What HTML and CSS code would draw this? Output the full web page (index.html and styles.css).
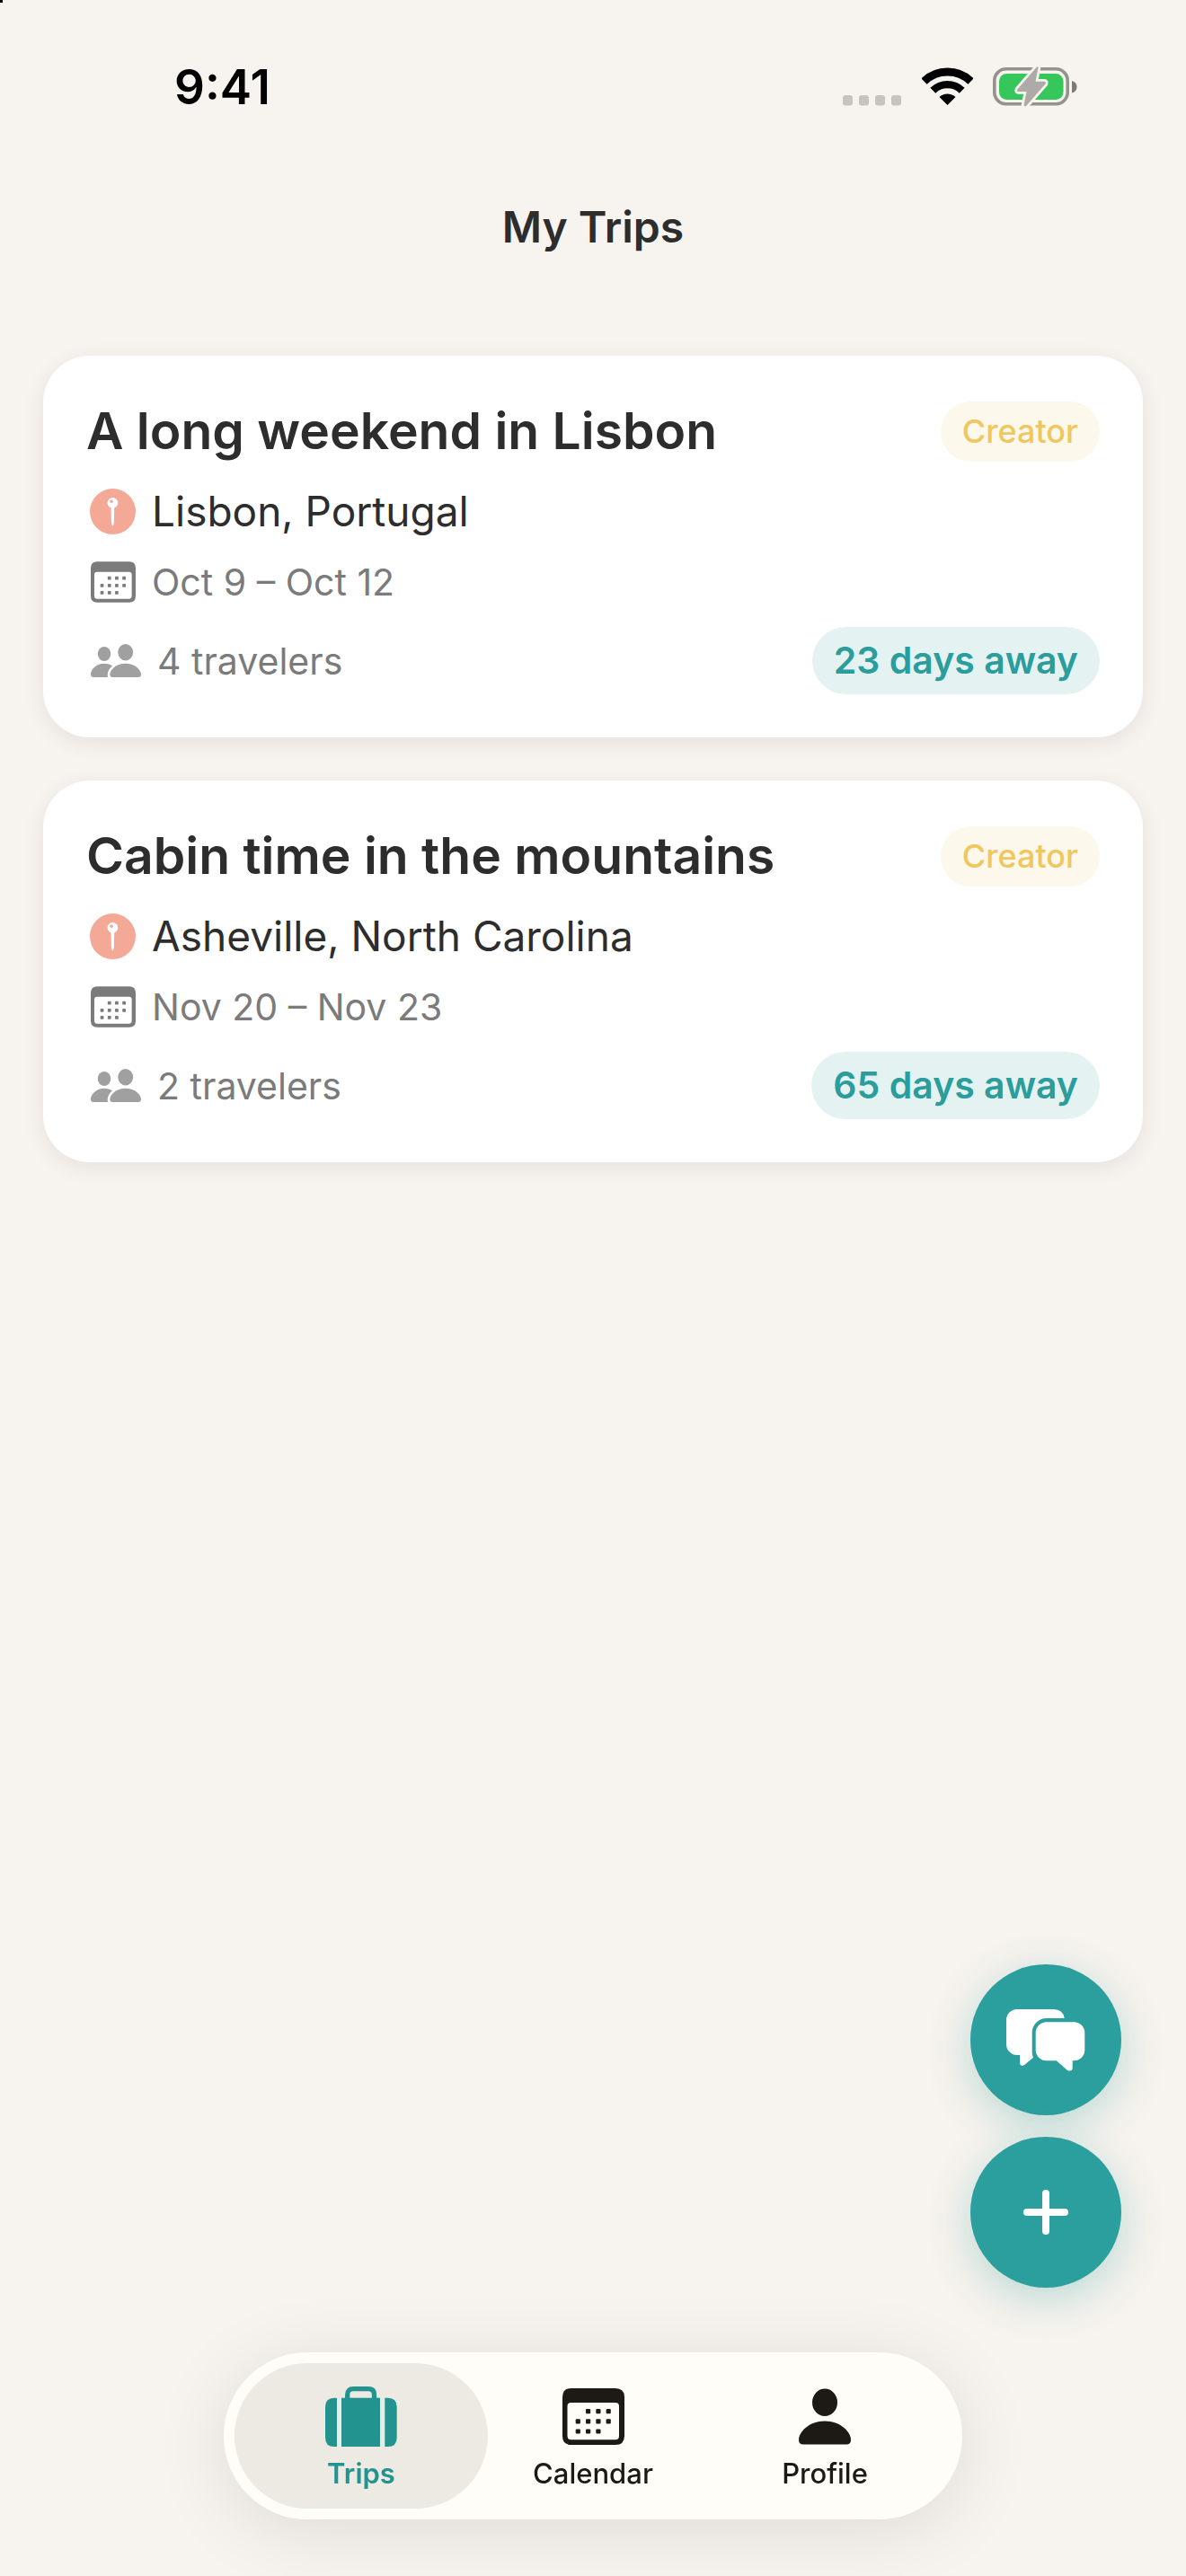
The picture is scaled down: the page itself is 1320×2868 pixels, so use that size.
FILE: index.html
```html
<!DOCTYPE html>
<html lang="en">
<head>
    <meta charset="UTF-8">
    <meta name="viewport" content="width=device-width, initial-scale=1.0">
    <title>My Trips</title>
    <link rel="stylesheet" href="styles.css">
</head>

<body>
    <!-- shared icons -->
    <svg class="sprite" aria-hidden="true">
        <symbol id="icon-pin" viewBox="0 0 51 51">
            <circle cx="25.5" cy="25.5" r="25.5" fill="#f4a896"/>
            <circle cx="25.4" cy="15.8" r="5.9" fill="#fff"/>
            <circle cx="24" cy="14.3" r="1.8" fill="#f4a896"/>
            <path d="M23.6 20H27.2L26.9 37Q26.4 41.5 25.4 41.5Q24.4 41.5 23.9 37Z" fill="#fff"/>
        </symbol>
        <symbol id="icon-calendar" viewBox="0 0 69 63">
            <path fill="currentColor" fill-rule="evenodd" d="M10 0H59Q69 0 69 10V53Q69 63 59 63H10Q0 63 0 53V10Q0 0 10 0ZM9.5 16Q5.5 16 5.5 20V53Q5.5 57.3 9.5 57.3H59Q63 57.3 63 53V20Q63 16 59 16Z"/>
            <g fill="currentColor">
                <rect x="26" y="23" width="5.2" height="5.2" rx="1"/>
                <rect x="37.3" y="23" width="5.2" height="5.2" rx="1"/>
                <rect x="48.6" y="23" width="5.2" height="5.2" rx="1"/>
                <rect x="14.7" y="34.2" width="5.2" height="5.2" rx="1"/>
                <rect x="26" y="34.2" width="5.2" height="5.2" rx="1"/>
                <rect x="37.3" y="34.2" width="5.2" height="5.2" rx="1"/>
                <rect x="48.6" y="34.2" width="5.2" height="5.2" rx="1"/>
                <rect x="14.7" y="45.4" width="5.2" height="5.2" rx="1"/>
                <rect x="26" y="45.4" width="5.2" height="5.2" rx="1"/>
                <rect x="37.3" y="45.4" width="5.2" height="5.2" rx="1"/>
            </g>
        </symbol>
        <symbol id="icon-people" viewBox="0 0 56 38">
            <g fill="currentColor">
                <ellipse cx="15" cy="11" rx="7.2" ry="8"/>
                <ellipse cx="38.7" cy="9.2" rx="8.4" ry="9.2"/>
                <path d="M3 37Q0 37 0 34C0 28 6.500 21.700 15 21.700C18.500 21.700 21.500 22.600 24 24.300C20.500 27.500 18.700 31 18.700 34.500Q18.700 36 19.200 37Z"/>
                <path d="M24.500 37Q21.300 37 21.300 34C21.300 29 28 21.700 38.700 21.700S56 29 56 34Q56 37 52.800 37Z"/>
            </g>
        </symbol>
    </svg>

    <div class="status-bar">
        <span class="time">9:41</span>
        <div class="status-icons">
            <svg class="signal" viewBox="0 0 66 12" aria-hidden="true">
                <g fill="#c7c4bf">
                    <rect x="0" y="0" width="11" height="11.500" rx="3"/>
                    <rect x="18" y="0" width="11" height="11.500" rx="3"/>
                    <rect x="36" y="0" width="11" height="11.500" rx="3"/>
                    <rect x="54" y="0" width="11" height="11.500" rx="3"/>
                </g>
            </svg>
            <svg class="wifi" viewBox="0 0 57 43" aria-hidden="true">
                <path d="M2.500 15.600A37.400 37.400 0 0 1 54.500 15.600" fill="none" stroke="#000" stroke-width="9"/>
                <path d="M12.300 25.800A23.100 23.100 0 0 1 44.700 25.800" fill="none" stroke="#000" stroke-width="8.300"/>
                <path d="M19.500 33A13 13 0 0 1 37.500 33L28.500 42Z"/>
            </svg>
            <svg class="battery" viewBox="0 1.500 94 43" aria-hidden="true">
                <rect x="1.800" y="3.300" width="81.400" height="39" rx="13" fill="none" stroke="#95928e" stroke-width="3.600"/>
                <rect x="7" y="8.500" width="71.500" height="29" rx="8.500" fill="#35c759"/>
                <path d="M88 16.500Q93.500 18 93.500 23.200T88 30Z" fill="#7c7a77"/>
                <path d="M49 1L27.300 26Q26.300 28.500 28.500 28.500H37.500L34.500 43.500Q35.500 46 37.500 44L58.500 20Q59.500 17.500 57.500 17.300H47.500L50.500 2Q50.500 0 49 1Z" fill="#aeaaa7" stroke="#f7f3ee" stroke-width="5.500" paint-order="stroke"/>
            </svg>
        </div>
    </div>

    <header class="header">
        <h1>My Trips</h1>
    </header>

    <main class="trips">
        <article class="card">
            <div class="row title-row">
                <h2>A long weekend in Lisbon</h2>
                <span class="role">Creator</span>
            </div>
            <div class="row location">
                <svg class="pin"><use href="#icon-pin"/></svg>
                <span>Lisbon, Portugal</span>
            </div>
            <div class="row dates">
                <svg class="cal"><use href="#icon-calendar"/></svg>
                <span>Oct 9 – Oct 12</span>
            </div>
            <div class="row footer-row">
                <div class="row travelers">
                    <svg class="people"><use href="#icon-people"/></svg>
                    <span>4 travelers</span>
                </div>
                <span class="countdown">23 days away</span>
            </div>
        </article>

        <article class="card">
            <div class="row title-row">
                <h2>Cabin time in the mountains</h2>
                <span class="role">Creator</span>
            </div>
            <div class="row location">
                <svg class="pin"><use href="#icon-pin"/></svg>
                <span>Asheville, North Carolina</span>
            </div>
            <div class="row dates">
                <svg class="cal"><use href="#icon-calendar"/></svg>
                <span>Nov 20 – Nov 23</span>
            </div>
            <div class="row footer-row">
                <div class="row travelers">
                    <svg class="people"><use href="#icon-people"/></svg>
                    <span>2 travelers</span>
                </div>
                <span class="countdown">65 days away</span>
            </div>
        </article>
    </main>

    <div class="actions">
        <button class="fab" type="button" aria-label="Messages">
            <svg class="chat" viewBox="0 0 88 69" aria-hidden="true">
                <g fill="#fff">
                    <path d="M12 0H52.500Q63 0 64.700 10H44.700A16 16 0 0 0 28.700 26V48Q28.700 51.500 30 53.700L20.500 61.800Q15 64.500 15 59V51H12A12 12 0 0 1 0 39V12A12 12 0 0 1 12 0Z"/>
                    <path d="M44.700 14.300H75.300A12 12 0 0 1 87.300 26.300V45.300A12 12 0 0 1 75.300 57.300H73.700V65Q73.700 70 68 68L55.700 57.300H44.700A12 12 0 0 1 32.700 45.300V26.300A12 12 0 0 1 44.700 14.300Z"/>
                </g>
            </svg>
        </button>
        <button class="fab" type="button" aria-label="Add trip">
            <svg class="plus" viewBox="0 0 50 50" aria-hidden="true">
                <path d="M25 4V46M4 25H46" stroke="#fff" stroke-width="8" stroke-linecap="round"/>
            </svg>
        </button>
    </div>

    <nav class="tab-bar">
        <a class="tab active" href="#trips">
            <svg class="suitcase" viewBox="0 0 80 67" aria-hidden="true">
                <g fill="currentColor">
                    <path d="M13 12.700V67H10Q0 67 0 57V22.700Q0 12.700 10 12.700Z"/>
                    <rect x="18" y="12.700" width="43" height="54.300"/>
                    <path d="M66.300 12.700H69.700Q79.700 12.700 79.700 22.700V57Q79.700 67 69.700 67H66.300Z"/>
                </g>
                <path d="M24.700 14V9Q24.700 2.700 31 2.700H48.200Q54.500 2.700 54.500 9V14" fill="none" stroke="currentColor" stroke-width="5.300"/>
            </svg>
            <span>Trips</span>
        </a>
        <a class="tab" href="#calendar">
            <svg class="cal-lg"><use href="#icon-calendar"/></svg>
            <span>Calendar</span>
        </a>
        <a class="tab" href="#profile">
            <svg class="person" viewBox="0 0 58 62" aria-hidden="true">
                <g fill="currentColor">
                    <ellipse cx="29" cy="15.300" rx="14" ry="15.300"/>
                    <path d="M5 62Q0 62 0 57C0 48 11.500 36 29 36S58 48 58 57Q58 62 53 62Z"/>
                </g>
            </svg>
            <span>Profile</span>
        </a>
    </nav>
</body>
</html>
```

FILE: styles.css
```css
* {
    box-sizing: border-box;
}

body {
    margin: 0;
    min-height: 100vh;
    font-family: Inter, "Liberation Sans", sans-serif;
    background-color: #f7f3ee;
    color: #2d2d2d;
}

/* small mark in the screen corner */
body::before {
    content: "";
    position: absolute;
    top: 0;
    left: 0;
    width: 3px;
    height: 3px;
    background-color: #000;
}

h1, h2 {
    margin: 0;
    font-weight: 600;
}

svg {
    display: block;
    flex-shrink: 0;
}

.sprite {
    position: absolute;
    width: 0;
    height: 0;
}

/* status bar */
.status-bar {
    display: flex;
    justify-content: space-between;
    align-items: center;
    height: 193px;
    padding: 0 121px 0 194px;
}

.time {
    font-size: 53px;
    line-height: 60px;
    font-weight: 600;
    color: #000;
}

.status-icons {
    display: flex;
    align-items: flex-end;
    gap: 22px;
}

.signal {
    width: 66px;
    height: 12px;
}

.wifi {
    width: 57px;
    height: 43px;
}

.battery {
    width: 94px;
    height: 43px;
    overflow: visible;
}

.header {
    padding: 30px 48px 113px;
    text-align: center;
}

.header h1 {
    font-size: 48px;
    line-height: 60px;
}

/* trip cards */
.trips {
    display: flex;
    flex-direction: column;
    gap: 48px;
    padding: 0 48px;
}

.card {
    display: flex;
    flex-direction: column;
    gap: 24px;
    padding: 48px;
    background-color: #fff;
    border-radius: 52px;
    box-shadow: 0 6px 24px rgba(45, 30, 20, 0.08);
}

.row {
    display: flex;
    align-items: center;
}

.title-row, .footer-row {
    justify-content: space-between;
}

.card h2 {
    font-size: 57px;
    line-height: 72px;
}

.role {
    padding: 12px 24px;
    border-radius: 36px;
    font-size: 36px;
    line-height: 43px;
    font-weight: 500;
    color: #f0c75e;
    background-color: #fcf8eb;
}

.location {
    gap: 18px;
    padding-left: 4px;
    font-size: 46px;
    line-height: 58px;
}

.dates, .travelers {
    gap: 18px;
    padding-left: 5px;
    font-size: 41px;
    line-height: 52px;
    color: #7b7b7b;
}

.countdown {
    padding: 12px 24px;
    border-radius: 38px;
    font-size: 41px;
    line-height: 51px;
    font-weight: 600;
    color: #2a9d9c;
    background-color: #e4f3f2;
}

.pin {
    width: 51px;
    height: 51px;
}

.cal {
    width: 50px;
    height: 46px;
}

.people {
    width: 56px;
    height: 38px;
    color: #a0a0a0;
}

/* floating buttons */
.actions {
    position: fixed;
    right: 72px;
    bottom: 321px;
    display: flex;
    flex-direction: column;
    gap: 24px;
}

.fab {
    display: flex;
    justify-content: center;
    align-items: center;
    width: 168px;
    height: 168px;
    padding: 0;
    border: none;
    border-radius: 50%;
    background-color: #2b9f9e;
    box-shadow: 0 12px 48px rgba(42, 157, 156, 0.3);
    cursor: pointer;
}

.chat {
    width: 88px;
    height: 69px;
}

.plus {
    width: 50px;
    height: 50px;
}

/* bottom tabs */
.tab-bar {
    position: fixed;
    left: 50%;
    bottom: 63px;
    transform: translateX(-50%);
    display: flex;
    padding: 12px;
    border-radius: 93px;
    background-color: #fffdf8;
    box-shadow: 0 12px 84px rgba(0, 0, 0, 0.1);
}

.tab {
    display: flex;
    flex-direction: column;
    justify-content: flex-end;
    align-items: center;
    gap: 12px;
    width: 282px;
    height: 162px;
    padding-bottom: 21px;
    border-radius: 81px;
    font-size: 31px;
    line-height: 36px;
    font-weight: 500;
    color: #1d1a15;
    text-decoration: none;
}

.tab + .tab {
    margin-left: -24px;
}

.tab.active {
    font-weight: 600;
    color: #23938f;
    background-color: #edeae4;
}

.tab svg {
    height: 67px;
}

.suitcase {
    width: 80px;
}

.cal-lg {
    width: 69px;
}

.person {
    width: 58px;
}
```
